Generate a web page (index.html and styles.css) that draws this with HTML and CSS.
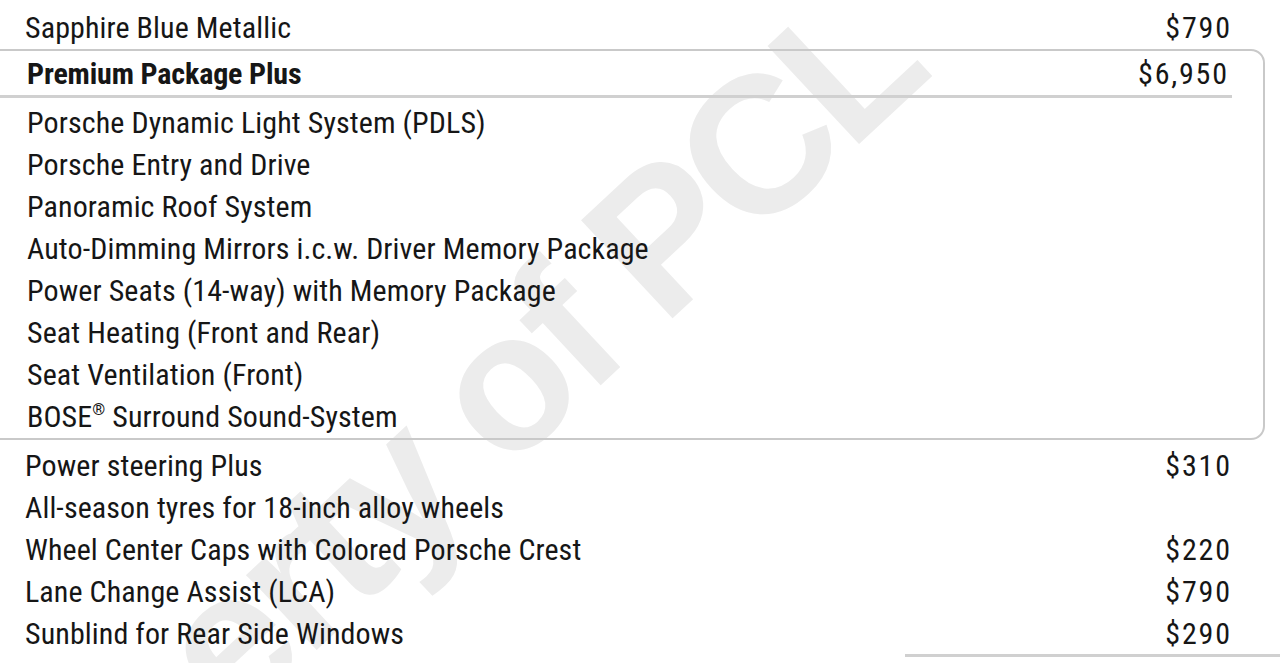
FILE: index.html
```html
<!DOCTYPE html>
<html lang="en">
<head>
<meta charset="utf-8">
<title>Options</title>
<link rel="stylesheet" href="styles.css">
</head>
<body>
<div class="page">
  <div class="watermark">Property of PCL</div>
  <div class="content">
    <div class="row outer"><span class="name">Sapphire Blue Metallic</span><span class="price">$790</span></div>
    <div class="package">
      <div class="row head"><span class="name">Premium Package Plus</span><span class="price">$6,950</span></div>
      <ul class="items">
        <li>Porsche Dynamic Light System (PDLS)</li>
        <li>Porsche Entry and Drive</li>
        <li>Panoramic Roof System</li>
        <li>Auto-Dimming Mirrors i.c.w. Driver Memory Package</li>
        <li>Power Seats (14-way) with Memory Package</li>
        <li>Seat Heating (Front and Rear)</li>
        <li>Seat Ventilation (Front)</li>
        <li>BOSE<sup class="reg">®</sup> Surround Sound-System</li>
      </ul>
    </div>
    <div class="row outer"><span class="name">Power steering Plus</span><span class="price">$310</span></div>
    <div class="row outer"><span class="name">All-season tyres for 18-inch alloy wheels</span><span class="price"></span></div>
    <div class="row outer"><span class="name">Wheel Center Caps with Colored Porsche Crest</span><span class="price">$220</span></div>
    <div class="row outer"><span class="name">Lane Change Assist (LCA)</span><span class="price">$790</span></div>
    <div class="row outer"><span class="name">Sunblind for Rear Side Windows</span><span class="price">$290</span></div>
    <div class="total-rule"></div>
  </div>
</div>
</body>
</html>
```
FILE: styles.css
```css
html, body {
  margin: 0;
  padding: 0;
  background: #ffffff;
}

.page {
  position: relative;
  width: 1280px;
  height: 663px;
  overflow: hidden;
  font-family: "Roboto Condensed", "Liberation Sans Narrow", Roboto, sans-serif;
  font-size: 30px;
  letter-spacing: 0.1px;
  color: #161616;
}

.watermark {
  position: absolute;
  left: 385px;
  top: 494px;
  transform: translate(-50%, -50%) rotate(-43deg);
  font-family: "Liberation Sans", Arial, sans-serif;
  font-weight: bold;
  font-size: 195px;
  letter-spacing: -7.8px;
  line-height: 1;
  white-space: nowrap;
  color: #ececec;
  z-index: 0;
}

.content {
  position: relative;
  z-index: 1;
  padding-top: 6px;
}

.row {
  display: flex;
  justify-content: space-between;
  align-items: center;
  height: 42px;
}

.outer {
  padding: 0 50px 0 25px;
}

.price {
  letter-spacing: 1.8px;
  margin-right: -1.8px;
}

.package {
  margin: 1px 15px 4px -20px;
  border: 2px solid #c9c9c9;
  border-radius: 14px;
}

.head {
  height: 44px;
  margin-right: 31px;
  padding: 0 5px 0 45px;
  border-bottom: 3px solid #d0d0d0;
}

.head .name {
  font-weight: bold;
  letter-spacing: -0.15px;
}

.items {
  list-style: none;
  margin: 0;
  padding: 4px 0 0 45px;
}

.items li {
  height: 42px;
  line-height: 42px;
}

.reg {
  font-size: 0.55em;
  vertical-align: 0.7em;
  line-height: 0;
}

.total-rule {
  margin-left: 905px;
  height: 3px;
  background: #d0d0d0;
}
```
